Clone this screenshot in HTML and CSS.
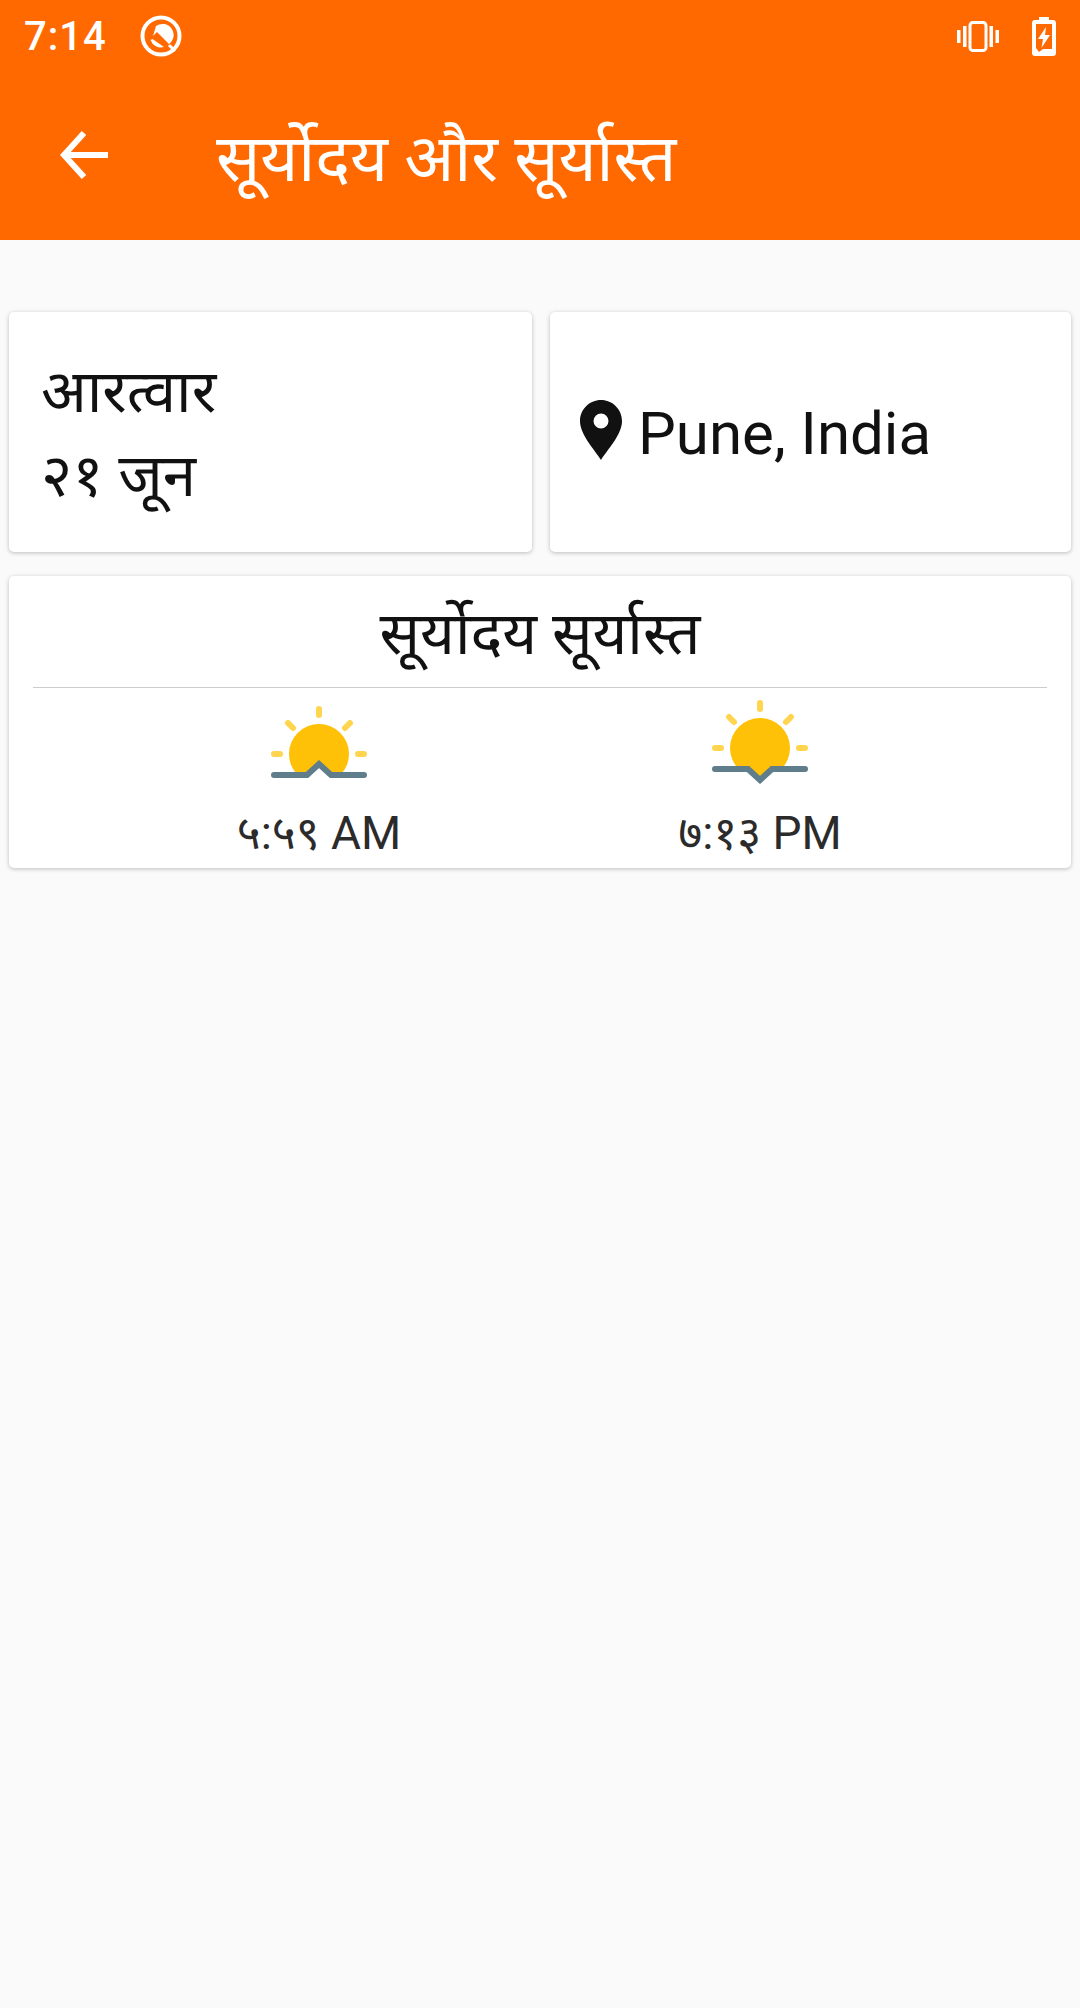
FILE: index.html
```html
<!DOCTYPE html>
<html lang="hi">
<head>
  <meta charset="UTF-8" />
  <meta name="viewport" content="width=device-width, initial-scale=1" />
  <title>सूर्योदय और सूर्यास्त</title>
  <link rel="stylesheet" href="styles.css">
</head>
<body>
  <header class="appbar">
    <div class="statusbar">
      <span class="clock">7:14</span>
      <svg class="status-app" viewBox="0 0 44 44" width="44" height="44">
        <circle cx="22" cy="22" r="18.5" fill="none" stroke="#fff" stroke-width="4"/>
        <path d="M17 12 A11 11 0 0 1 30 30 L18 18 L14 22 Z" fill="#fff"/>
        <path d="M13.5 25 L25 33 A11 11 0 0 1 11.5 26 Z" fill="#fff"/>
        <path d="M30 31 L36 37" stroke="#fff" stroke-width="3"/>
      </svg>
      <span class="status-right">
        <svg viewBox="0 0 42 31" width="42" height="31">
          <rect x="13" y="1.5" width="16" height="28" rx="3" fill="none" stroke="#fff" stroke-width="3"/>
          <rect x="6" y="5" width="3.5" height="21" fill="#fff"/>
          <rect x="32.5" y="5" width="3.5" height="21" fill="#fff"/>
          <rect x="0" y="9" width="3.5" height="13" fill="#fff"/>
          <rect x="38.5" y="9" width="3.5" height="13" fill="#fff"/>
        </svg>
        <svg viewBox="0 0 24 39" width="24" height="39">
          <path d="M7 0 H17 V3 H21 Q24 3 24 6 V36 Q24 39 21 39 H3 Q0 39 0 36 V6 Q0 3 3 3 H7 Z" fill="#fff"/>
          <path d="M4 7 H20 V32 H11 L7 35 L4 31 Z" fill="#ff6900"/>
          <path d="M14 10 L6 22 H11 L9.5 31 L18 18 H13 Z" fill="#fff"/>
        </svg>
      </span>
    </div>
    <div class="toolbar">
      <svg class="back" viewBox="0 0 48 48" width="48" height="48">
        <path d="M48 24 H5 M24 2 L4 24 L24 46" fill="none" stroke="#fff" stroke-width="6"/>
      </svg>
      <h1 class="title">सूर्योदय और सूर्यास्त</h1>
    </div>
  </header>

  <main class="content">
    <div class="top-row">
      <section class="card date-card">
        <div>आरत्वार</div>
        <div>२१ जून</div>
      </section>
      <section class="card place-card">
        <svg class="pin" viewBox="0 0 42 60" width="42" height="60">
          <path fill-rule="evenodd" d="M21 0 C32.6 0 42 9.4 42 21 C42 35 27 50 21 60 C15 50 0 35 0 21 C0 9.4 9.4 0 21 0 Z M21 13.5 A7.5 7.5 0 1 0 21 28.5 A7.5 7.5 0 1 0 21 13.5 Z" fill="#111"/>
        </svg>
        <span>Pune, India</span>
      </section>
    </div>

    <section class="card sun-card">
      <h2 class="sun-title">सूर्योदय सूर्यास्त</h2>
      <div class="sun-row">
        <div class="sun-col">
          <svg class="sun sun-up" viewBox="0 0 96 78" width="96" height="78">
            <path d="M48 3 V9 M17 17 L22 22 M79 17 L74 22 M3 48 H9 M87 48 H93" stroke="#ffd54f" stroke-width="6" stroke-linecap="round"/>
            <path d="M26.6 69 A30 30 0 1 1 69.4 69 H60 L48 58 L36 69 Z" fill="#ffc107"/>
            <path d="M3 69 H36 L48 58 L60 69 H93" fill="none" stroke="#607d8b" stroke-width="6" stroke-linecap="round"/>
          </svg>
          <div class="sun-time">५:५९ AM</div>
        </div>
        <div class="sun-col">
          <svg class="sun sun-down" viewBox="0 0 96 84" width="96" height="84">
            <path d="M48 3 V9 M17 17 L22 22 M79 17 L74 22 M3 48 H9 M87 48 H93" stroke="#ffd54f" stroke-width="6" stroke-linecap="round"/>
            <path d="M26.6 69 A30 30 0 1 1 69.4 69 H60 L48 80 L36 69 Z" fill="#ffc107"/>
            <path d="M3 69 H36 L48 80 L60 69 H93" fill="none" stroke="#607d8b" stroke-width="6" stroke-linecap="round"/>
          </svg>
          <div class="sun-time">७:१३ PM</div>
        </div>
      </div>
    </section>
  </main>
</body>
</html>
```

FILE: styles.css
```css
* {
  box-sizing: border-box;
}
html, body {
  margin: 0;
  height: 100%;
}
body {
  font-family: Roboto, "Noto Sans", "Noto Sans Devanagari", sans-serif;
  background: #fafafa;
  color: #212121;
  overflow: hidden;
}
.appbar {
  background: #ff6900;
  color: #fff;
  height: 240px;
}
.statusbar {
  display: flex;
  align-items: center;
  height: 72px;
  padding: 0 24px 0 24px;
}
.clock {
  font-size: 40px;
  font-weight: 500;
  letter-spacing: 1px;
}
.status-app {
  margin-left: 32px;
}
.status-right {
  margin-left: auto;
  display: flex;
  align-items: center;
  gap: 33px;
}
.toolbar {
  display: flex;
  align-items: center;
  height: 168px;
  padding: 0 0 2px 60px;
}
.title {
  margin: 0 0 0 108px;
  font-size: 65.5px;
  font-weight: 400;
}
.content {
  padding: 72px 9px 0;
}
.top-row {
  display: flex;
  gap: 18px;
  margin-bottom: 24px;
}
.card {
  background: #fff;
  border-radius: 5px;
  box-shadow: 0 1px 4px rgba(0,0,0,0.25);
}
.date-card, .place-card {
  flex: 1;
  height: 240px;
}
.date-card {
  display: flex;
  flex-direction: column;
  justify-content: center;
  padding: 4px 0 0 32px;
  font-size: 60px;
  line-height: 84px;
  color: #111;
}
.place-card {
  display: flex;
  align-items: center;
  padding: 2px 0 0 30px;
  font-size: 60px;
  color: #111;
}
.pin {
  margin: 0 16px 6px 0;
}
.sun-card {
  height: 292px;
  padding: 0 24px;
}
.sun-title {
  margin: 0;
  height: 112px;
  line-height: 116px;
  font-size: 60px;
  font-weight: 400;
  text-align: center;
  color: #111;
  border-bottom: 1px solid #ccc;
}
.sun-row {
  display: grid;
  grid-template-columns: 300px 300px;
  column-gap: 141px;
  padding-left: 136px;
}
.sun-col {
  text-align: center;
}
.sun {
  display: block;
  margin: 0 auto;
}
.sun-up {
  margin-top: 18px;
}
.sun-down {
  margin-top: 12px;
}
.sun-time {
  margin-top: 16px;
  font-size: 46px;
  color: #2b2b2b;
}
```
